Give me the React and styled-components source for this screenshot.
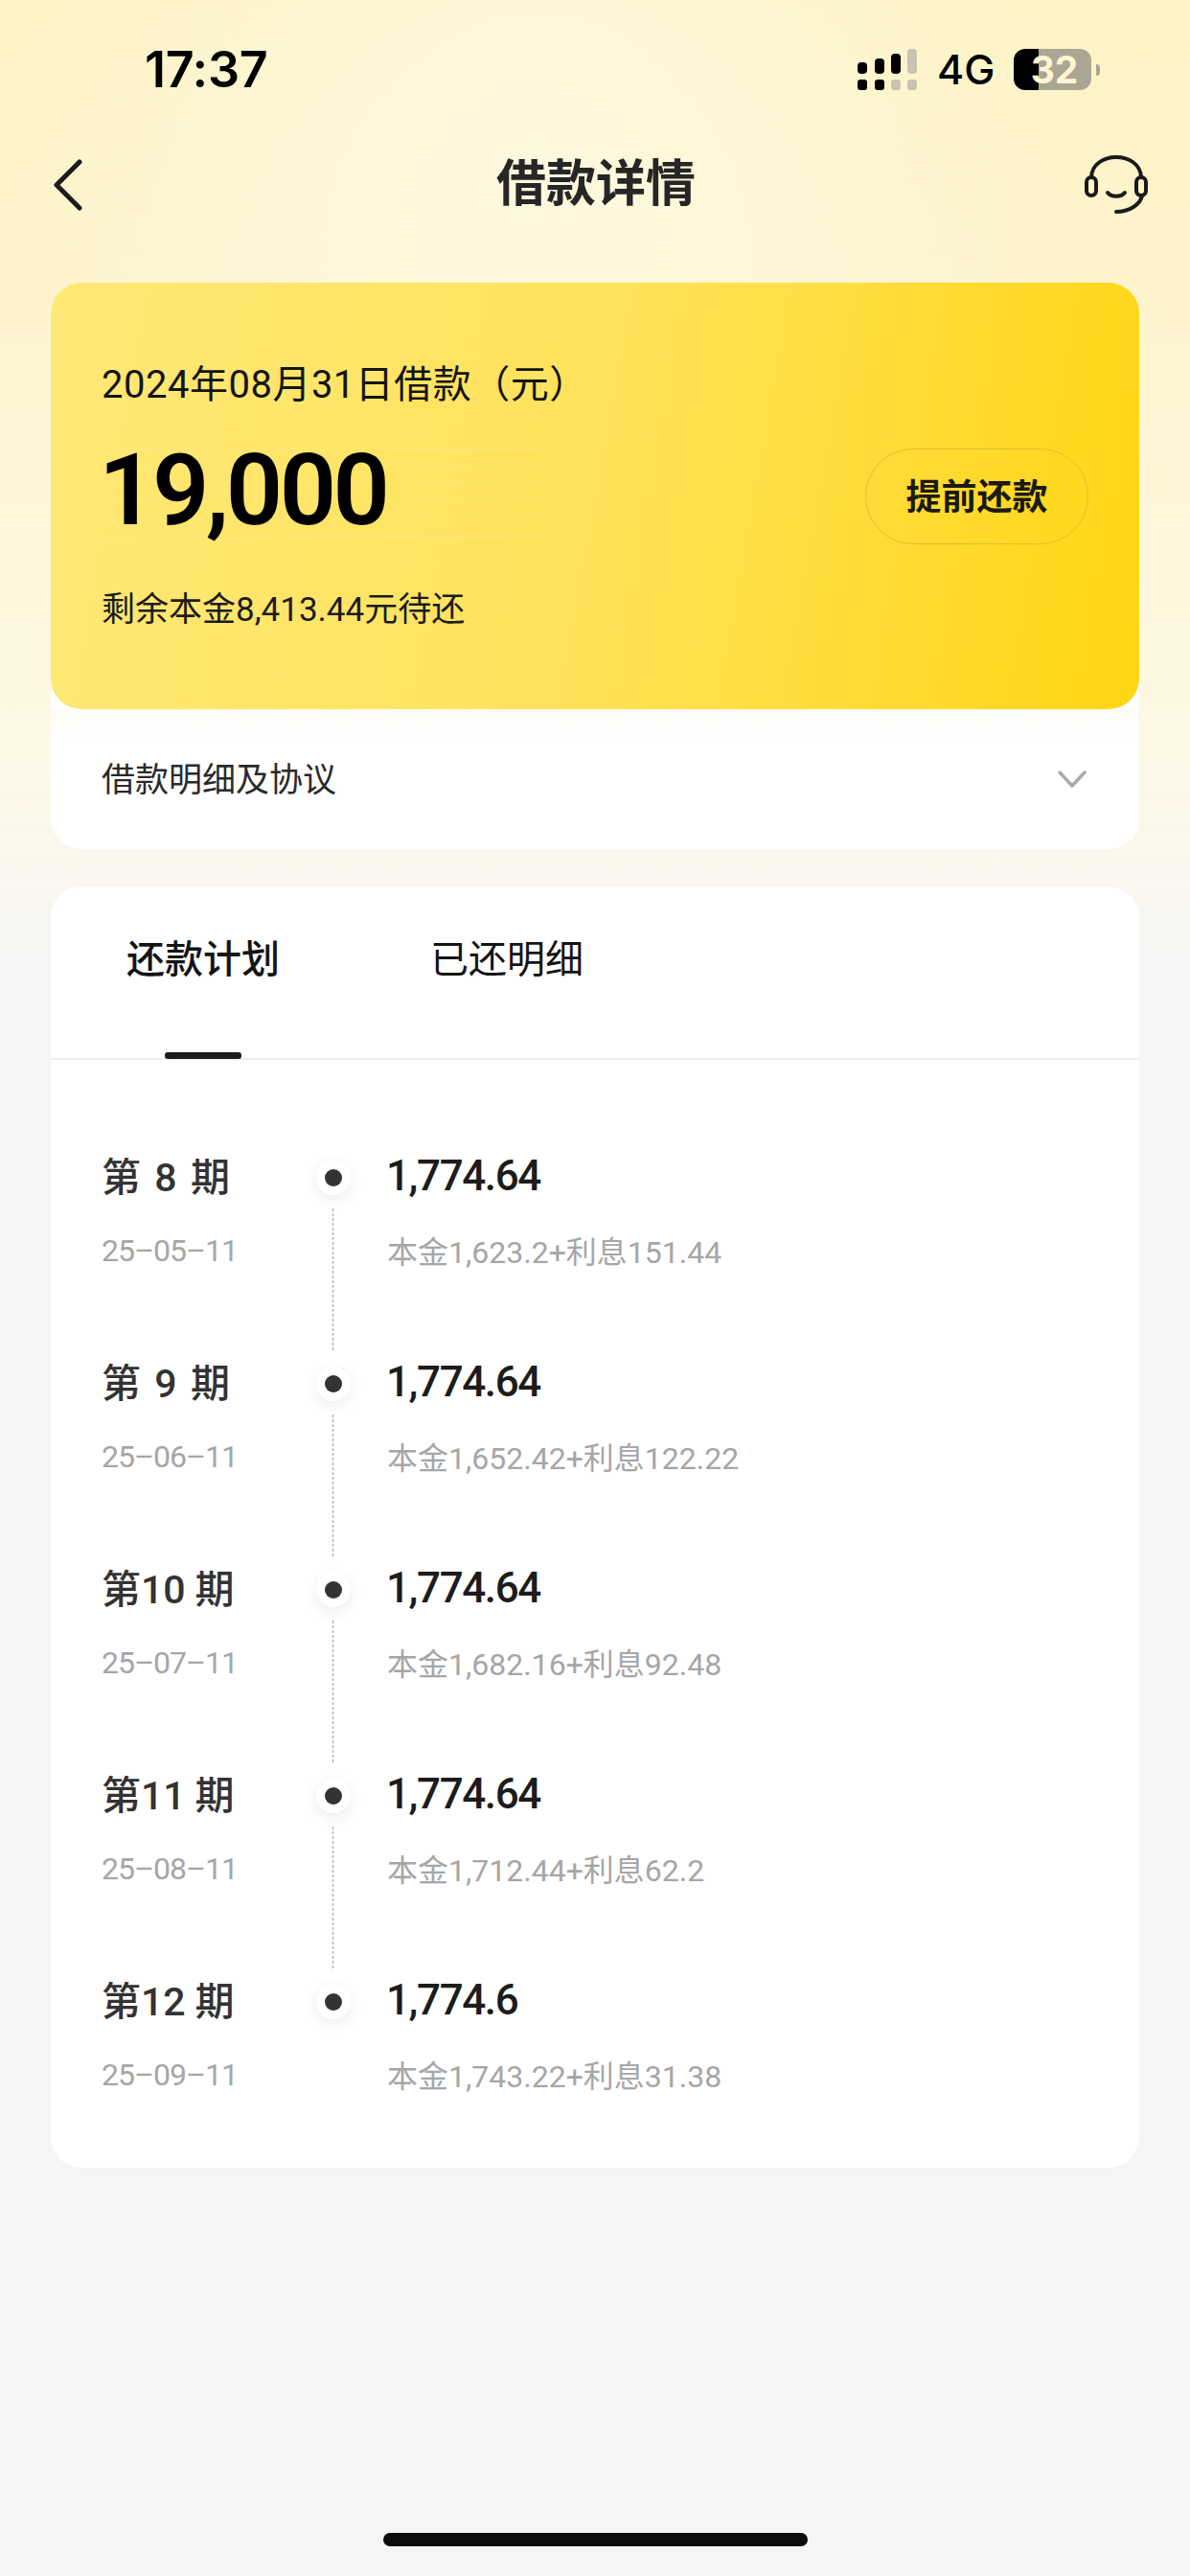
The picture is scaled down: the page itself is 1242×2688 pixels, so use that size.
import React from "react";
import styled, { createGlobalStyle } from "styled-components";

const plan_list = [
  { no: "8", date: "25-05-11", amount: "1,774.64", detail: "本金1,623.2+利息151.44" },
  { no: "9", date: "25-06-11", amount: "1,774.64", detail: "本金1,652.42+利息122.22" },
  { no: "10", date: "25-07-11", amount: "1,774.64", detail: "本金1,682.16+利息92.48" },
  { no: "11", date: "25-08-11", amount: "1,774.64", detail: "本金1,712.44+利息62.2" },
  { no: "12", date: "25-09-11", amount: "1,774.6", detail: "本金1,743.22+利息31.38" },
];

const GlobalStyle = createGlobalStyle`
  html, body {
    margin: 0;
    padding: 0;
    background: #f5f5f5;
  }
  * {
    box-sizing: border-box;
  }
`;

const Page = styled.div`
  width: 1242px;
  height: 2688px;
  display: flex;
  flex-direction: column;
  overflow: hidden;
  font-family: Roboto, "Noto Sans CJK SC", sans-serif;
  color: #1c1c1c;
  background:
    radial-gradient(ellipse 560px 520px at 560px 170px, rgba(255, 250, 232, 0.7), rgba(255, 250, 232, 0) 100%),
    linear-gradient(180deg, #fdf3c4 0, #fdf4cd 300px, #fef8e4 760px, #f9f7ef 930px, #f5f5f5 1010px);
`;

const StatusBar = styled.div`
  height: 146px;
  padding: 44px 0 0 151px;
  display: flex;
  align-items: flex-start;
`;

const Time = styled.div`
  width: 744px;
  font-family: Inter, sans-serif;
  font-size: 52px;
  line-height: 58px;
  font-weight: 600;
  color: #000;
  letter-spacing: -0.3px;
`;

const StatusRight = styled.div`
  display: flex;
  align-items: center;
  margin-top: 7px;
`;

const Network = styled.div`
  font-family: Inter, sans-serif;
  font-size: 43px;
  line-height: 43px;
  font-weight: 500;
  color: #000;
  margin-left: 20px;
  width: 80px;
`;

const Battery = styled.div`
  position: relative;
  width: 81px;
  height: 43px;
  border-radius: 12px;
  background: linear-gradient(90deg, #000 0, #000 32%, #aba594 32%, #aba594 100%);
  color: #fdf5d3;
  font-family: Inter, sans-serif;
  font-size: 39px;
  line-height: 43px;
  font-weight: 700;
  text-align: center;
  padding-left: 4px;
  &::after {
    content: "";
    position: absolute;
    left: 86px;
    top: 16px;
    width: 4px;
    height: 12px;
    border-radius: 0 6px 6px 0;
    background: #aba594;
  }
`;

const NavBar = styled.div`
  height: 149px;
  padding: 0 44px 0 56px;
  display: grid;
  grid-template-columns: 1fr auto 1fr;
  align-items: flex-start;
`;

const NavTitle = styled.h1`
  margin: 14px 0 0;
  font-size: 52px;
  line-height: 66px;
  font-weight: 600;
  color: #262626;
  transform: translateX(-5px);
`;

const BackIcon = styled.svg`
  width: 30px;
  height: 54px;
  margin-top: 20px;
`;

const ServiceIcon = styled.svg`
  width: 66px;
  height: 62px;
  margin-top: 16px;
  justify-self: end;
`;

const Content = styled.div`
  padding: 0 53px;
  display: flex;
  flex-direction: column;
`;

const LoanCard = styled.div`
  background: #fff;
  border-radius: 32px;
`;

const LoanHero = styled.div`
  height: 445px;
  padding: 79px 53px 0;
  border-radius: 32px;
  background: linear-gradient(100deg, #ffe877 0, #ffe25a 50%, #ffd512 100%);
`;

const LoanDate = styled.div`
  font-size: 40px;
  line-height: 56px;
  letter-spacing: 0.5px;
  color: #141414;
`;

const AmountRow = styled.div`
  display: flex;
  align-items: center;
  justify-content: space-between;
  margin-top: 38px;
`;

const Amount = styled.div`
  width: 462px;
  height: 100px;
  font-size: 104px;
  line-height: 88px;
  font-weight: 600;
  letter-spacing: -3.5px;
  text-indent: -3px;
  color: #000;
  background: repeating-linear-gradient(
    180deg,
    rgba(255, 255, 255, 0.12) 0,
    rgba(255, 255, 255, 0.12) 1px,
    transparent 1px,
    transparent 18.5px
  );
`;

const PrepayButton = styled.button`
  width: 233px;
  height: 100px;
  border: 1.5px solid #e5bd2a;
  border-radius: 50px;
  background: transparent;
  font-family: inherit;
  font-size: 37px;
  font-weight: 600;
  color: #1c1a10;
  padding: 0 0 4px;
`;

const Remain = styled.div`
  margin-top: 44px;
  font-size: 35px;
  line-height: 50px;
  color: #1c1c1c;
`;

const AgreementRow = styled.div`
  height: 146px;
  padding: 0 54px 0 53px;
  display: flex;
  align-items: center;
  justify-content: space-between;
  font-size: 35px;
  color: #2a2a2a;
  background: linear-gradient(180deg, #fbfbf8 0, #fff 30px);
  border-radius: 0 0 32px 32px;
  span {
    margin-top: -5px;
  }
`;

const ChevronIcon = styled.svg`
  width: 32px;
  height: 20px;
`;

const PlanCard = styled.div`
  margin-top: 39px;
  background: #fff;
  border-radius: 32px;
`;

const Tabs = styled.div`
  height: 181px;
  display: flex;
  padding-left: 79px;
  gap: 157px;
  border-bottom: 2px solid #eeeeee;
`;

const Tab = styled.div`
  position: relative;
  padding-top: 47px;
  font-size: 40px;
  line-height: 60px;
  font-weight: ${(p) => (p.$active ? 500 : 400)};
  color: #141414;
  &::after {
    content: "";
    display: ${(p) => (p.$active ? "block" : "none")};
    position: absolute;
    left: 40px;
    bottom: -1px;
    width: 80px;
    height: 7px;
    border-radius: 3px;
    background: #1c1c1c;
  }
`;

const PlanList = styled.div`
  padding: 96px 53px 0;
`;

const PlanRow = styled.div`
  height: ${(p) => (p.$last ? "200px" : "215px")};
  display: grid;
  grid-template-columns: 223px 75px 1fr;
`;

const Period = styled.div`
  width: 134px;
  display: flex;
  justify-content: space-between;
  font-size: 41px;
  line-height: 54px;
  font-weight: 500;
  color: #333;
`;

const PeriodNo = styled.span`
  margin-right: ${(p) => (p.$wide ? "10px" : "0")};
`;

const PlanDate = styled.div`
  margin-top: 26px;
  font-size: 32px;
  line-height: 46px;
  letter-spacing: -1px;
  color: #a6a6a6;
`;

const Timeline = styled.div`
  display: flex;
  flex-direction: column;
  align-items: center;
  padding-top: 9px;
  transform: translateX(-19px);
`;

const Dot = styled.div`
  flex: none;
  width: 36px;
  height: 36px;
  border-radius: 50%;
  background: #fff;
  box-shadow: 0 4px 14px rgba(60, 70, 110, 0.1);
  display: flex;
  align-items: center;
  justify-content: center;
  &::before {
    content: "";
    width: 18px;
    height: 18px;
    border-radius: 50%;
    background: #333;
  }
`;

const Connector = styled.div`
  flex: 1;
  width: 0;
  margin: 14px 0 8px;
  border-left: 1px dashed #9e9e9e;
`;

const PlanAmount = styled.div`
  font-size: 44px;
  line-height: 50px;
  font-weight: 500;
  color: #1c1c1c;
  letter-spacing: -1.4px;
  text-indent: -1px;
`;

const PlanDetail = styled.div`
  margin-top: 32px;
  font-size: 32px;
  line-height: 46px;
  color: #a6a6a6;
`;

const HomeBar = styled.div`
  margin: auto auto 31px;
  width: 443px;
  height: 14px;
  border-radius: 7px;
  background: #0c0c0c;
`;

const SignalIcon = () => (
  <svg width="63" height="43" viewBox="0 0 63 43">
    <rect x="0" y="14" width="10" height="12" rx="4" fill="#000" />
    <rect x="0" y="32" width="10" height="11" rx="3" fill="#000" />
    <rect x="18" y="10" width="10" height="16" rx="4" fill="#000" />
    <rect x="18" y="32" width="10" height="11" rx="3" fill="#000" />
    <rect x="35" y="5" width="10" height="21" rx="4" fill="#000" />
    <rect x="35" y="32" width="10" height="11" rx="3" fill="#c9c4b0" />
    <rect x="52" y="0" width="10" height="26" rx="4" fill="#c9c4b0" />
    <rect x="52" y="32" width="10" height="11" rx="3" fill="#c9c4b0" />
  </svg>
);

const App = () => {
  return (
    <Page>
      <GlobalStyle />
      <StatusBar>
        <Time>17:37</Time>
        <StatusRight>
          <SignalIcon />
          <Network>4G</Network>
          <Battery>32</Battery>
        </StatusRight>
      </StatusBar>

      <NavBar>
        <BackIcon viewBox="0 0 30 54" fill="none" stroke="#1c1c1c" strokeWidth="5" strokeLinecap="round" strokeLinejoin="round">
          <path d="M27 3 L3 27 L27 51" />
        </BackIcon>
        <NavTitle>借款详情</NavTitle>
        <ServiceIcon viewBox="0 0 66 62" fill="none" stroke="#1a1a1a" strokeWidth="4" strokeLinecap="round">
          <path d="M7 23 C8 -5 58 -5 59 23" />
          <rect x="2" y="23" width="10" height="19" rx="5" />
          <rect x="54" y="23" width="10" height="19" rx="5" />
          <path d="M24 39 C28 44 38 44 42 39" />
          <path d="M60 42 C58 52 46 59 33 59" />
        </ServiceIcon>
      </NavBar>

      <Content>
        <LoanCard>
          <LoanHero>
            <LoanDate>2024年08月31日借款（元）</LoanDate>
            <AmountRow>
              <Amount>19,000</Amount>
              <PrepayButton>提前还款</PrepayButton>
            </AmountRow>
            <Remain>剩余本金8,413.44元待还</Remain>
          </LoanHero>
          <AgreementRow>
            <span>借款明细及协议</span>
            <ChevronIcon viewBox="0 0 32 20" fill="none" stroke="#aaaaaa" strokeWidth="3.5" strokeLinecap="round" strokeLinejoin="round">
              <path d="M3 3 L16 17 L29 3" />
            </ChevronIcon>
          </AgreementRow>
        </LoanCard>

        <PlanCard>
          <Tabs>
            <Tab $active>还款计划</Tab>
            <Tab>已还明细</Tab>
          </Tabs>
          <PlanList>
            {plan_list.map((item, index) => {
              const last = index === plan_list.length - 1;
              return (
                <PlanRow key={item.no} $last={last}>
                  <div>
                    <Period>
                      <span>第</span>
                      <PeriodNo $wide={item.no.length > 1}>{item.no}</PeriodNo>
                      <span>期</span>
                    </Period>
                    <PlanDate>{item.date.replace(/-/g, "–")}</PlanDate>
                  </div>
                  <Timeline>
                    <Dot />
                    {!last && <Connector />}
                  </Timeline>
                  <div>
                    <PlanAmount>{item.amount}</PlanAmount>
                    <PlanDetail>{item.detail}</PlanDetail>
                  </div>
                </PlanRow>
              );
            })}
          </PlanList>
        </PlanCard>
      </Content>

      <HomeBar />
    </Page>
  );
};

export default App;
